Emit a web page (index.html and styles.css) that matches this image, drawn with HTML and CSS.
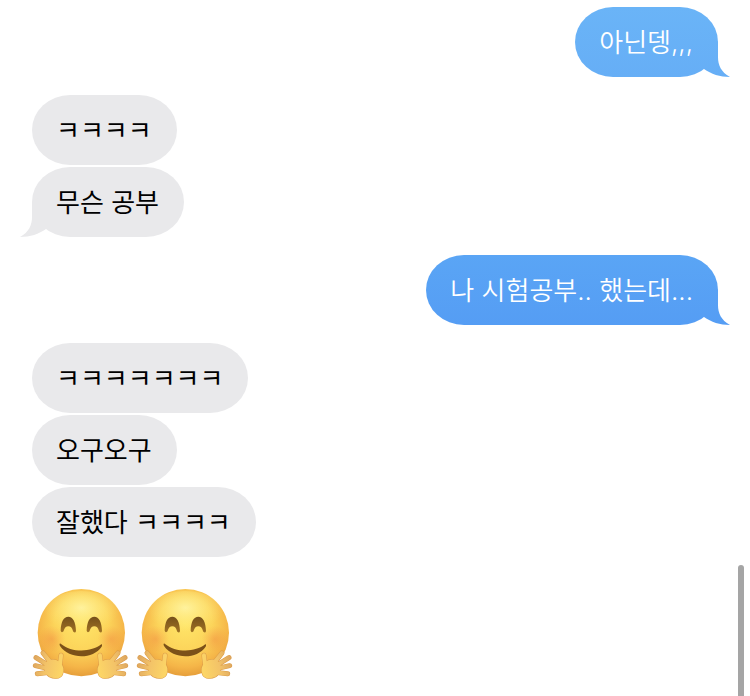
FILE: index.html
```html
<!DOCTYPE html>
<html lang="ko">
<head>
    <meta charset="UTF-8">
    <meta name="viewport" content="width=device-width, initial-scale=1.0">
    <title>Messages</title>
    <link rel="stylesheet" href="styles.css">
</head>
<body>
    <main class="chat">
        <div class="group sent">
            <p class="bubble light tail">아닌뎅,,,</p>
        </div>
        <div class="group received">
            <p class="bubble">ㅋㅋㅋㅋ</p>
            <p class="bubble tail">무슨 공부</p>
        </div>
        <div class="group sent">
            <p class="bubble tail">나 시험공부.. 했는데...</p>
        </div>
        <div class="group received">
            <p class="bubble">ㅋㅋㅋㅋㅋㅋㅋ</p>
            <p class="bubble">오구오구</p>
            <p class="bubble">잘했다 ㅋㅋㅋㅋ</p>
        </div>
        <div class="emojis">
            <svg class="emoji" viewBox="9 9 312 312" role="img" aria-label="hugging face">
                <defs>
                    <radialGradient id="skin" cx="50%" cy="40%" r="62%">
                        <stop offset="0" stop-color="#ffe568"/>
                        <stop offset="0.5" stop-color="#fcd45a"/>
                        <stop offset="0.8" stop-color="#f5b548"/>
                        <stop offset="1" stop-color="#e39a38"/>
                    </radialGradient>
                    <radialGradient id="shine" cx="50%" cy="35%" r="50%">
                        <stop offset="0" stop-color="#fff6a8" stop-opacity="0.85"/>
                        <stop offset="1" stop-color="#ffee80" stop-opacity="0"/>
                    </radialGradient>
                    <radialGradient id="blush">
                        <stop offset="0" stop-color="#f0803c" stop-opacity="0.4"/>
                        <stop offset="1" stop-color="#f0803c" stop-opacity="0"/>
                    </radialGradient>
                    <linearGradient id="eye" x1="0" y1="0" x2="0" y2="1">
                        <stop offset="0" stop-color="#75501a"/>
                        <stop offset="1" stop-color="#a07224"/>
                    </linearGradient>
                    <linearGradient id="palm" gradientUnits="userSpaceOnUse" x1="26" y1="240" x2="112" y2="260">
                        <stop offset="0" stop-color="#dda660"/>
                        <stop offset="0.45" stop-color="#f3c368"/>
                        <stop offset="1" stop-color="#fcd566"/>
                    </linearGradient>
                    <g id="fingers">
                        <path d="M88 262L54 219M80 262L33 233M80 268L31 257M82 276L37 281" fill="none" stroke-linecap="round"/>
                        <path d="M100 278C103 260 107 242 108 226" fill="none" stroke-linecap="round"/>
                        <path d="M68 250C76 244 88 242 100 250C108 258 112 270 107 281C102 290 88 291 76 285C66 279 60 260 68 250Z"/>
                    </g>
                    <g id="hand">
                        <use href="#fingers" class="hand-edge"/>
                        <use href="#fingers" class="hand-fill"/>
                    </g>
                    <g id="hug">
                        <circle cx="169" cy="158" r="131" fill="url(#skin)"/>
                        <ellipse cx="169" cy="105" rx="115" ry="72" fill="url(#shine)"/>
                        <circle cx="80" cy="177" r="40" fill="url(#blush)"/>
                        <circle cx="258" cy="177" r="40" fill="url(#blush)"/>
                        <path d="M107 151C108 125 116 110 130 110C144 110 152 126 153 152C153 159 146 159 144 153C141 143 137 139 130 139C123 139 119 143 116 152C114 158 107 158 107 151Z" fill="url(#eye)"/>
                        <path d="M185 151C186 125 194 110 208 110C222 110 230 126 231 152C231 159 224 159 222 153C219 143 215 139 208 139C201 139 197 143 194 152C192 158 185 158 185 151Z" fill="url(#eye)"/>
                        <path d="M107 191C140 218 197 218 229 193C232 192 232 197 230 200C203 239 133 238 105 198C103 194 103 189 107 191Z" fill="#7c5119"/>
                        <use href="#hand"/>
                        <use href="#hand" transform="translate(333 0) scale(-1 1)"/>
                    </g>
                </defs>
                <use href="#hug"/>
            </svg>
            <svg class="emoji" viewBox="9 9 312 312" role="img" aria-label="hugging face">
                <use href="#hug"/>
            </svg>
        </div>
    </main>
    <div class="scroll-thumb"></div>
</body>
</html>
```

FILE: styles.css
```css
* {
    box-sizing: border-box;
}

body {
    margin: 0;
    background: #fff;
    font-family: Inter, 'Noto Sans CJK KR', sans-serif;
    overflow: hidden;
}

.chat {
    display: flex;
    flex-direction: column;
    gap: 18px;
    padding: 7px 32px 0;
}

.group {
    display: flex;
    flex-direction: column;
    gap: 2px;
}

.sent {
    align-items: flex-end;
}

.received {
    align-items: flex-start;
}

.bubble {
    position: relative;
    margin: 0;
    padding: 16px 25px 14px 24px;
    border-radius: 38px / 35px;
    font-size: 26px;
    line-height: 40px;
    color: #000;
    background: #e9e9eb;
}

.sent .bubble {
    color: #fff;
    font-weight: 350;
    background: linear-gradient(#5aa5f5, #559df4);
}

.sent .bubble.light {
    background: linear-gradient(#6ab4f7, #66aef6);
}

/* little curl at the bottom corner of the last bubble */
.tail::after {
    content: '';
    position: absolute;
    right: -12px;
    bottom: 0;
    width: 30px;
    height: 70px;
    background: inherit;
    clip-path: path('M18 35V50C18 58 21 65 30 70C20 70 11 67 4 62L0 50L10 30Z');
}

.received .tail::after {
    right: auto;
    left: -12px;
    transform: scaleX(-1);
}

.emojis {
    display: flex;
    margin: 8px -4px 0;
}

.emoji {
    width: 104px;
    height: 104px;
}

.hand-edge {
    fill: #dc9c48;
    stroke: #dc9c48;
    stroke-width: 15px;
}

.hand-fill {
    fill: url(#palm);
    stroke: url(#palm);
    stroke-width: 12px;
}

.scroll-thumb {
    position: fixed;
    top: 565px;
    right: 6px;
    bottom: 0;
    width: 6px;
    border-radius: 3px 3px 0 0;
    background: #a5a5a5;
}
```
